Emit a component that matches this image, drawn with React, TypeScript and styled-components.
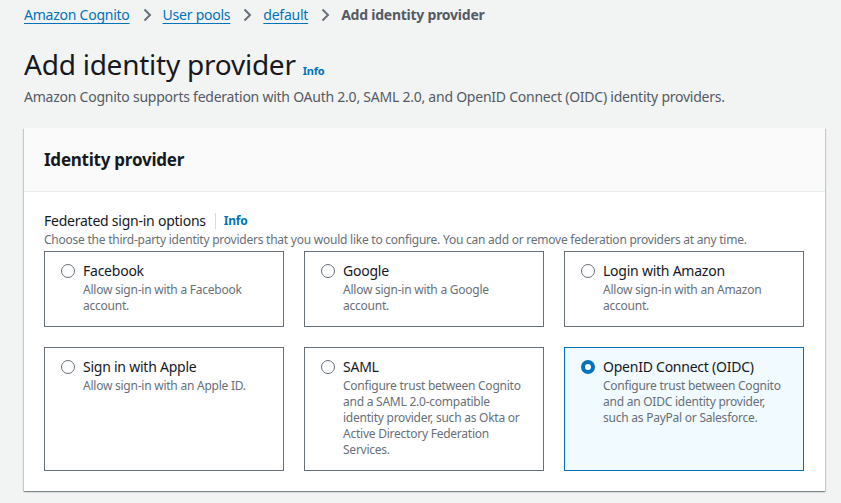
import React from "react";
import styled, { createGlobalStyle } from "styled-components";

const Global = createGlobalStyle`
  html, body { margin: 0; padding: 0; background: #f2f3f3; }
  body { font-family: "Noto Sans", "Open Sans", sans-serif; color: #16191f; letter-spacing: -0.015em; -webkit-font-smoothing: antialiased; }
  * { box-sizing: border-box; }
`;

const Page = styled.div`
  padding: 5px 16px 12px 24px;
  width: 841px;
  min-height: 503px;
`;

const Crumbs = styled.nav`
  display: flex;
  align-items: center;
  height: 20px;
  font-size: 14px;
  line-height: 20px;
`;

const CrumbLink = styled.a`
  color: #0073bb;
  text-decoration: underline;
  text-underline-offset: 3px;
  text-decoration-thickness: 1px;
  cursor: pointer;
`;

const CrumbCurrent = styled.span`
  color: #545b64;
  font-weight: 700;
`;

const Sep = styled.span`
  display: inline-flex;
  margin: 0 11px 0 12px;
  color: #687078;
`;

const TitleRow = styled.div`
  display: flex;
  align-items: baseline;
  gap: 7px;
  margin-top: 21px;
`;

const Title = styled.h1`
  margin: 0;
  font-size: 28px;
  line-height: 36px;
  font-weight: 400;
  color: #16191f;
`;

const InfoLink = styled.a<{ $size?: number }>`
  color: #0073bb;
  font-weight: 700;
  font-size: ${(p) => p.$size ?? 12}px;
  cursor: pointer;
`;

const Lead = styled.p`
  margin: 4px 0 0;
  font-size: 14px;
  line-height: 22px;
  color: #545b64;
`;

const Container = styled.section`
  margin-top: 20px;
  width: 801px;
  background: #ffffff;
  box-shadow: 0 1px 1px 0 rgba(0, 28, 36, 0.3), 1px 1px 1px 0 rgba(0, 28, 36, 0.15),
    -1px 1px 1px 0 rgba(0, 28, 36, 0.15);
`;

const Header = styled.header`
  height: 64px;
  padding: 0 20px;
  display: flex;
  align-items: center;
  background: #fafafa;
  border-bottom: 1px solid #eaeded;
`;

const HeaderTitle = styled.h2`
  margin: 0;
  font-size: 17px;
  line-height: 22px;
  font-weight: 700;
  color: #16191f;
`;

const Body = styled.div`
  padding: 18px 20px 20px;
`;

const LabelRow = styled.div`
  display: flex;
  align-items: center;
  font-size: 14px;
  line-height: 22px;
  color: #16191f;
`;

const Divider = styled.span`
  width: 1px;
  height: 16px;
  background: #d5dbdb;
  margin: 0 8px 0 9px;
`;

const Hint = styled.div`
  font-size: 12px;
  line-height: 16px;
  color: #687078;
  margin-bottom: 3px;
`;

const Grid = styled.div`
  display: grid;
  grid-template-columns: repeat(3, 240px);
  grid-template-rows: 76px 124px;
  gap: 20px;
`;

const Tile = styled.label<{ $selected?: boolean }>`
  display: flex;
  align-items: flex-start;
  gap: 8px;
  padding: 9px 16px;
  border: 1px solid ${(p) => (p.$selected ? "#0073bb" : "#687078")};
  background: ${(p) => (p.$selected ? "#f1faff" : "#ffffff")};
  cursor: pointer;
`;

const Radio = styled.span<{ $checked?: boolean }>`
  flex: none;
  width: 14px;
  height: 14px;
  margin-top: 3px;
  border-radius: 50%;
  border: ${(p) => (p.$checked ? "4px solid #0073bb" : "1px solid #687078")};
  background: #ffffff;
`;

const TileText = styled.div`
  display: flex;
  flex-direction: column;
`;

const TileTitle = styled.span`
  font-size: 14px;
  line-height: 20px;
  color: #16191f;
`;

const TileDesc = styled.span`
  font-size: 12px;
  line-height: 16px;
  color: #687078;
  margin-top: 1px;
`;

const Chevron = () => (
  <svg width="10" height="14" viewBox="0 0 10 14" fill="none">
    <path d="M2.5 1.5 L8 7 L2.5 12.5" stroke="#687078" strokeWidth="2" />
  </svg>
);

const providers = [
  { name: "Facebook", desc: "Allow sign-in with a Facebook account." },
  { name: "Google", desc: "Allow sign-in with a Google account." },
  { name: "Login with Amazon", desc: "Allow sign-in with an Amazon account." },
  { name: "Sign in with Apple", desc: "Allow sign-in with an Apple ID." },
  {
    name: "SAML",
    desc: "Configure trust between Cognito and a SAML 2.0-compatible identity provider, such as Okta or Active Directory Federation Services.",
  },
  {
    name: "OpenID Connect (OIDC)",
    desc: "Configure trust between Cognito and an OIDC identity provider, such as PayPal or Salesforce.",
    selected: true,
  },
];

export default function App() {
  return (
    <>
      <Global />
      <Page>
        <Crumbs>
          <CrumbLink>Amazon Cognito</CrumbLink>
          <Sep><Chevron /></Sep>
          <CrumbLink>User pools</CrumbLink>
          <Sep><Chevron /></Sep>
          <CrumbLink>default</CrumbLink>
          <Sep><Chevron /></Sep>
          <CrumbCurrent>Add identity provider</CrumbCurrent>
        </Crumbs>
        <TitleRow>
          <Title>Add identity provider</Title>
          <InfoLink $size={11}>Info</InfoLink>
        </TitleRow>
        <Lead>
          Amazon Cognito supports federation with OAuth 2.0, SAML 2.0, and OpenID Connect (OIDC) identity providers.
        </Lead>
        <Container>
          <Header>
            <HeaderTitle>Identity provider</HeaderTitle>
          </Header>
          <Body>
            <LabelRow>
              Federated sign-in options
              <Divider />
              <InfoLink>Info</InfoLink>
            </LabelRow>
            <Hint>
              Choose the third-party identity providers that you would like to configure. You can add or remove federation providers at any time.
            </Hint>
            <Grid>
              {providers.map((p) => (
                <Tile key={p.name} $selected={p.selected}>
                  <Radio $checked={p.selected} />
                  <TileText>
                    <TileTitle>{p.name}</TileTitle>
                    <TileDesc>{p.desc}</TileDesc>
                  </TileText>
                </Tile>
              ))}
            </Grid>
          </Body>
        </Container>
      </Page>
    </>
  );
}
